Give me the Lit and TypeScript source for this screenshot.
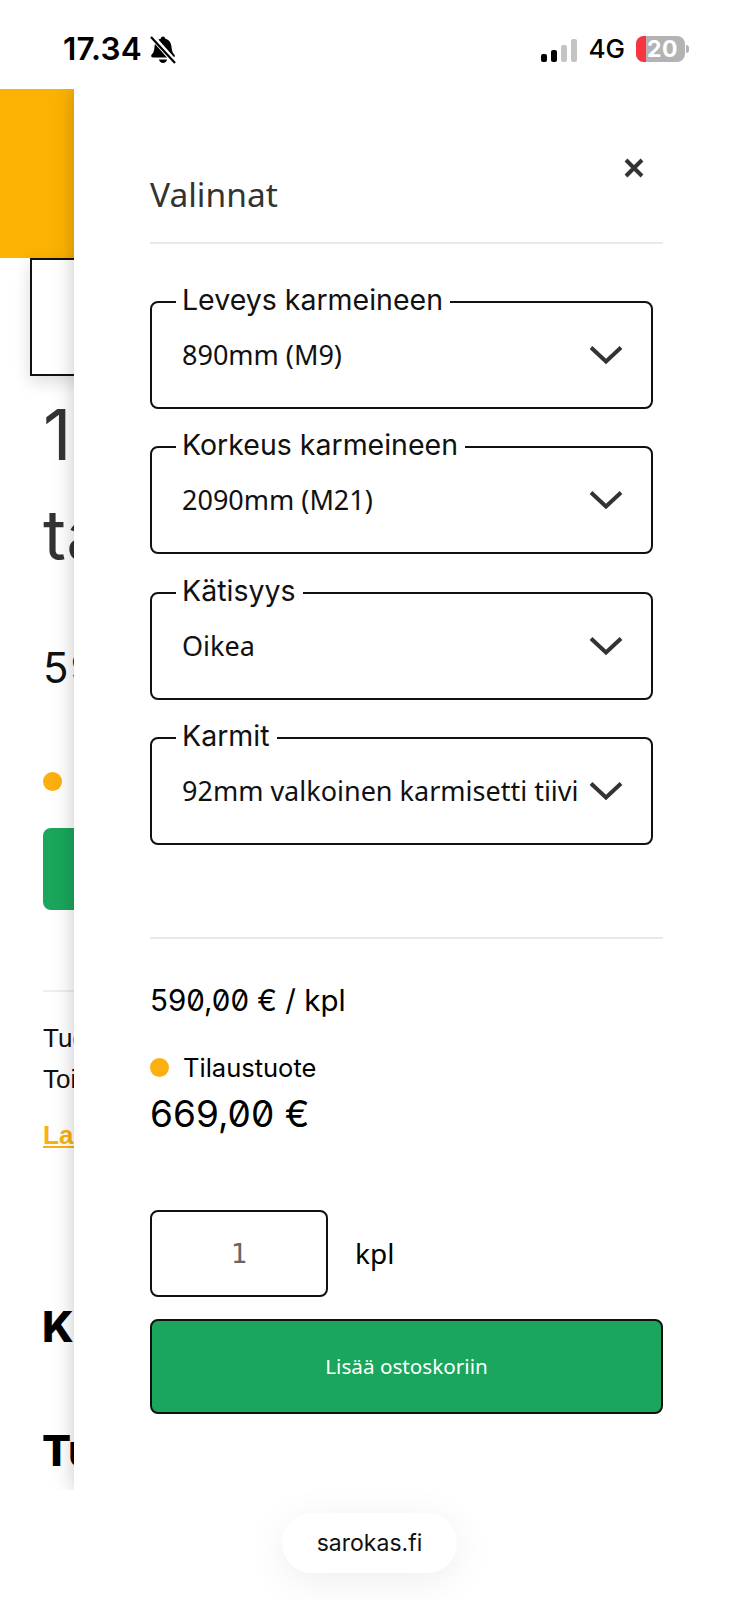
import { LitElement, html, css } from "lit";
import { customElement } from "lit/decorators.js";

const options = [
  { label: "Leveys karmeineen", value: "890mm (M9)" },
  { label: "Korkeus karmeineen", value: "2090mm (M21)" },
  { label: "Kätisyys", value: "Oikea" },
  { label: "Karmit", value: "92mm valkoinen karmisetti tiivi" },
];

@customElement("app-root")
export class AppRoot extends LitElement {
  static styles = css`
    :host { display: block; width: 739px; height: 1600px; overflow: hidden; background: #fff; font-family: Inter, "Noto Sans", sans-serif; color: #000; }
    .status { height: 89px; box-sizing: border-box; padding: 34px 50px 0 63px; display: flex; justify-content: space-between; align-items: flex-start; }
    .left, .right { display: flex; align-items: center; }
    .time { font-size: 31.5px; font-weight: 600; line-height: 30px; letter-spacing: 0.2px; }
    .bell { width: 28px; height: 29px; margin-left: 7px; }
    .signal { display: flex; align-items: flex-end; gap: 4px; height: 25px; margin-right: 12px; }
    .signal i { width: 6px; border-radius: 2px; background: #000; display: block; }
    .signal i.off { background: #c4c4c4; }
    .net { font-size: 26px; line-height: 30px; font-weight: 500; margin-right: 11px; }
    .battery { display: flex; width: 49px; height: 26px; border-radius: 8px; overflow: hidden; background: #b3b3b3; color: #fff; font-weight: 700; font-size: 23px; line-height: 26px; }
    .battery b { width: 10px; background: #f9333f; display: block; }
    .battery span { padding-left: 1px; letter-spacing: 0.5px; }
    .nub { width: 3px; height: 8px; margin-left: 1px; background: #b3b3b3; border-radius: 0 3px 3px 0; }

    .page { position: relative; height: 1401px; overflow: hidden; }
    .behind { display: flex; flex-direction: column; align-items: flex-start; }
    .hero { height: 169px; width: 100%; background: #fbb202; }
    .thumb { box-sizing: border-box; width: 300px; height: 118px; margin-left: 30px; border: 2px solid #111; background: #fff; box-shadow: 0 6px 16px rgba(0,0,0,.14); }
    .title { margin: 9px 0 0 43px; font-size: 70px; line-height: 100px; color: #333; }
    .price { margin: 60px 0 0 43px; font-size: 42px; line-height: 46px; color: #111; letter-spacing: 2px; }
    .dot { width: 19px; height: 19px; border-radius: 50%; background: #fbb00f; }
    .dot.bg { margin: 81px 0 0 43px; }
    .buy { width: 200px; height: 82px; margin: 37px 0 0 43px; border-radius: 8px; background: #1aa65c; }
    .rule { width: 200px; height: 2px; margin: 80px 0 0 43px; background: #eee; }
    .line { margin-left: 43px; font-size: 26px; line-height: 41px; font-family: "Liberation Sans", sans-serif; color: #111; }
    .line.first { margin-top: 26px; }
    .link { margin: 19px 0 0 43px; font-size: 26px; line-height: 32px; font-weight: 700; font-family: "Liberation Sans", sans-serif; color: #fbb00f; text-decoration: underline; }
    .head { margin-left: 42px; font-size: 43px; line-height: 50px; font-weight: 800; font-family: Inter, sans-serif; color: #000; }
    .head.a { margin-top: 150px; }
    .head.b { margin-top: 74px; }

    .drawer { position: absolute; top: 0; bottom: 0; left: 74px; right: 0; box-sizing: border-box; padding: 0 76px; background: #fff; box-shadow: 0 0 20px rgba(0,0,0,.22); }
    .drawer-head { display: flex; justify-content: space-between; align-items: flex-start; height: 155px; box-sizing: border-box; padding: 69px 19px 0 0; border-bottom: 2px solid #e9e9e9; }
    h2 { margin: 0; margin-top: 13px; font: 400 33.5px/46px "Noto Sans", sans-serif; color: #333; }
    .close { width: 20px; height: 20px; display: block; }
    .fields { display: flex; flex-direction: column; gap: 18.3px; width: 503px; margin-top: 38px; }
    fieldset { margin: 0; padding: 0 28px 19px 24px; border: 2px solid #111; border-radius: 8px; min-width: 0; }
    legend { padding: 0 7px 4px 6px; margin: 0; font-size: 28.5px; line-height: 36px; font-weight: 400; color: #111; }
    .row { display: flex; justify-content: space-between; align-items: center; height: 66px; font: 400 27px/36px "Noto Sans", sans-serif; color: #111; padding-left: 6px; }
    .chev { width: 34px; height: 20px; flex: none; }
    .summary { margin-top: 92px; border-top: 2px solid #e9e9e9; padding-top: 41px; }
    .unit { font-size: 29.5px; line-height: 40px; font-feature-settings: "zero"; }
    .stock { display: flex; align-items: center; gap: 14px; margin-top: 30px; font-size: 25.5px; line-height: 36px; }
    .total { font-size: 37px; line-height: 50px; font-feature-settings: "zero"; margin-top: 3px; }
    .qty { display: flex; align-items: center; gap: 27px; margin-top: 71px; }
    .qty-box { box-sizing: border-box; width: 178px; height: 87px; border: 2px solid #111; border-radius: 8px; display: flex; align-items: center; justify-content: center; font: 400 27px "DejaVu Sans Mono", monospace; color: #666; }
    .qty-unit { font: 400 28px/36px "Noto Sans", sans-serif; }
    .add { box-sizing: border-box; height: 95px; margin-top: 22px; border: 2px solid #111; border-radius: 8px; background: #1aa65c; color: #fff; display: flex; align-items: center; justify-content: center; font: 400 20.700px/30px "Noto Sans", sans-serif; }

    .chrome { height: 110px; display: flex; justify-content: center; align-items: flex-start; padding-top: 23px; box-sizing: border-box; }
    .pill { width: 175px; height: 60px; border-radius: 30px; background: #fff; box-shadow: 0 8px 40px rgba(0,0,0,.07); display: flex; align-items: center; justify-content: center; font-size: 23px; font-weight: 400; color: #111; }
  `;

  render() {
    return html`
      <div class="status">
        <div class="left">
          <span class="time">17.34</span>
          <svg class="bell" viewBox="0 0 28 29">
            <path d="M14 1.5c1.2 0 2 .8 2 1.900 4 1 6.200 4.200 6.500 8.500.2 3.300 1 5.800 3 7.800.8 1.200.2 2.800-1.500 2.800H4c-1.700 0-2.300-1.600-1.500-2.800 2-2 2.800-4.500 3-7.800.3-4.300 2.500-7.500 6.500-8.500 0-1.100.8-1.900 2-1.900z" fill="#000"/>
            <path d="M10 24.500h8c-.3 2-2 3.500-4 3.500s-3.700-1.500-4-3.500z" fill="#000"/>
            <path d="M3 1.500l23 26" stroke="#fff" stroke-width="5.500"/>
            <path d="M2 2l24 26" stroke="#000" stroke-width="2.200"/>
          </svg>
        </div>
        <div class="right">
          <div class="signal">
            <i style="height:8px"></i><i style="height:12px"></i><i class="off" style="height:17px"></i><i class="off" style="height:23px"></i>
          </div>
          <span class="net">4G</span>
          <div class="battery"><b></b><span>20</span></div>
          <div class="nub"></div>
        </div>
      </div>

      <div class="page">
        <div class="behind">
          <div class="hero"></div>
          <div class="thumb"></div>
          <div class="title">1<br />ta</div>
          <div class="price">59</div>
          <div class="dot bg"></div>
          <div class="buy"></div>
          <div class="rule"></div>
          <div class="line first">Tuo</div>
          <div class="line">Toi</div>
          <div class="link">Las</div>
          <div class="head a">Ku</div>
          <div class="head b">Tu</div>
        </div>

        <aside class="drawer">
          <div class="drawer-head">
            <h2>Valinnat</h2>
            <svg class="close" viewBox="0 0 20 20"><path d="M2 2l16 16M18 2L2 18" stroke="#333" stroke-width="4" fill="none"/></svg>
          </div>
          <div class="fields">
            ${options.map(
              (o) => html`
                <fieldset>
                  <legend>${o.label}</legend>
                  <div class="row">
                    <span>${o.value}</span>
                    <svg class="chev" viewBox="0 0 34 20"><path d="M2 2.500l15 14 15-14" stroke="#333" stroke-width="4" fill="none"/></svg>
                  </div>
                </fieldset>
              `
            )}
          </div>
          <div class="summary">
            <div class="unit">590,00 € / kpl</div>
            <div class="stock"><span class="dot"></span><span>Tilaustuote</span></div>
            <div class="total">669,00 €</div>
            <div class="qty">
              <div class="qty-box">1</div>
              <span class="qty-unit">kpl</span>
            </div>
            <div class="add">Lisää ostoskoriin</div>
          </div>
        </aside>
      </div>

      <div class="chrome"><div class="pill">sarokas.fi</div></div>
    `;
  }
}
